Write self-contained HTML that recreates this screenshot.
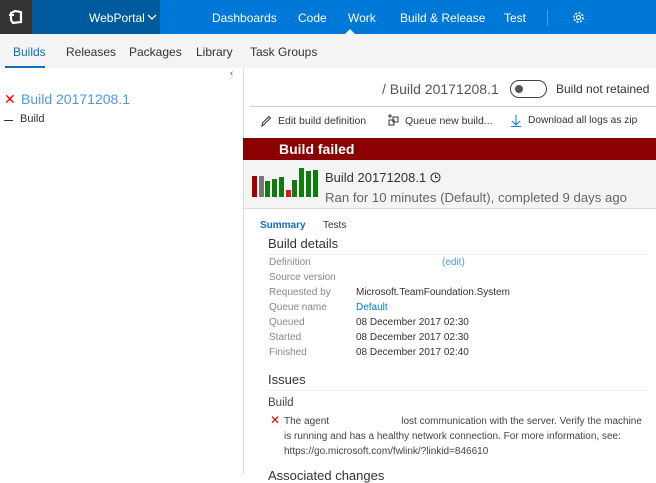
<!DOCTYPE html>
<html><head><style>
*{margin:0;padding:0;box-sizing:border-box}
body{width:656px;height:474px;overflow:hidden;font-family:"Liberation Sans",sans-serif;background:#fff;position:relative;color:#333}
.a{position:absolute;white-space:nowrap}
.nav{left:0;top:0;width:656px;height:34px;background:#0078d7}
.n{color:#fff;font-size:12px;top:11px}
.s{font-size:12px;top:45px;color:#333}
.lbl{font-size:10px;color:#888;left:269px}
.val{font-size:10px;color:#333;left:356px}
</style></head><body>
<div class="a nav"></div>
<div class="a" style="left:0;top:0;width:32px;height:34px;background:#333"></div>
<svg class="a" style="left:8px;top:9px" width="16" height="16" viewBox="0 0 16 16"><path d="M3 4 L7 2 L13 3 L13 13 L5 14 L3 11 Z" fill="none" stroke="#fff" stroke-width="2.2"/><path d="M1 6 L6 6" stroke="#fff" stroke-width="2"/></svg>
<div class="a" style="left:32px;top:0;width:128px;height:34px;background:#005a9e"></div>
<span class="a n" style="left:89px">WebPortal</span>
<svg class="a" style="left:147px;top:13px" width="10" height="8"><path d="M1 2 L5 6 L9 2" fill="none" stroke="#fff" stroke-width="1.3"/></svg>
<span class="a n" style="left:212px">Dashboards</span>
<span class="a n" style="left:298px">Code</span>
<span class="a n" style="left:348px">Work</span>
<span class="a n" style="left:400px">Build &amp; Release</span>
<span class="a n" style="left:504px">Test</span>
<div class="a" style="left:547px;top:10px;width:1px;height:16px;background:#4da0e4"></div>
<svg class="a" style="left:572px;top:11px" width="13" height="13" viewBox="0 0 13 13"><circle cx="6.5" cy="6.5" r="4.5" fill="none" stroke="#fff" stroke-width="1.6" stroke-dasharray="2 1.5"/><circle cx="6.5" cy="6.5" r="2" fill="none" stroke="#fff" stroke-width="1.2"/></svg>
<svg class="a" style="left:344px;top:29px" width="12" height="6"><path d="M0 6 L6 0 L12 6Z" fill="#f4f4f4"/></svg>
<div class="a" style="left:0;top:34px;width:656px;height:34px;background:#f4f4f4"></div>
<span class="a s" style="left:13px;color:#106ebe">Builds</span>
<div class="a" style="left:5px;top:66px;width:40px;height:2px;background:#106ebe"></div>
<span class="a s" style="left:66px">Releases</span>
<span class="a s" style="left:129px">Packages</span>
<span class="a s" style="left:196px">Library</span>
<span class="a s" style="left:250px">Task Groups</span>
<div class="a" style="left:243px;top:68px;width:1px;height:406px;background:#ddd"></div>
<span class="a" style="left:230px;top:68px;font-size:10px;color:#555">‹</span>
<span class="a" style="left:4px;top:91px;font-size:14px;color:#e00">✕</span>
<span class="a" style="left:21px;top:91px;font-size:14px;color:#4a9be0">Build 20171208.1</span>
<div class="a" style="left:4px;top:120px;width:9px;height:1px;background:#333"></div>
<span class="a" style="left:20px;top:113px;font-size:11px;color:#333">Build</span>
<span class="a" style="left:382px;top:81px;font-size:14px;color:#555">/ Build 20171208.1</span>
<div class="a" style="left:510px;top:80px;width:37px;height:18px;border:1.5px solid #444;border-radius:9px"></div>
<div class="a" style="left:515px;top:85px;width:8px;height:8px;border-radius:50%;background:#555"></div>
<span class="a" style="left:556px;top:82px;font-size:12px;color:#333">Build not retained</span>
<div class="a" style="left:250px;top:106px;width:406px;height:1px;background:#ccc"></div>
<svg class="a" style="left:260px;top:115px" width="12" height="12"><path d="M2 11 L2.5 8 L9 1.5 L10.5 3 L4 9.5 Z" fill="none" stroke="#333" stroke-width="1"/></svg>
<span class="a" style="left:278px;top:115px;font-size:10.5px">Edit build definition</span>
<svg class="a" style="left:387px;top:114px" width="13" height="13"><rect x="2" y="6" width="5" height="5" fill="none" stroke="#333"/><rect x="6" y="3" width="5" height="5" fill="none" stroke="#333"/><path d="M3 0 V4 M1 2 H5" stroke="#333"/></svg>
<span class="a" style="left:405px;top:115px;font-size:10.5px">Queue new build...</span>
<svg class="a" style="left:510px;top:114px" width="12" height="13"><path d="M6 1 V11 M2 7 L6 11 L10 7 M1 12.5 H11" fill="none" stroke="#0078d7" stroke-width="1"/></svg>
<span class="a" style="left:528px;top:115px;font-size:10.2px">Download all logs as zip</span>
<div class="a" style="left:243px;top:138px;width:413px;height:22px;background:#8b0000"></div>
<span class="a" style="left:279px;top:141px;font-size:14px;font-weight:bold;color:#fff">Build failed</span>
<div class="a" style="left:244px;top:160px;width:412px;height:49px;background:#f4f4f4;border-bottom:1px solid #ddd"></div>
<div class="a" style="left:252px;top:176px;width:5px;height:21px;background:#a00000"></div>
<div class="a" style="left:259px;top:176px;width:5px;height:21px;background:#777"></div>
<div class="a" style="left:265px;top:181px;width:5px;height:16px;background:#107c10"></div>
<div class="a" style="left:272px;top:179px;width:5px;height:18px;background:#107c10"></div>
<div class="a" style="left:279px;top:177px;width:5px;height:20px;background:#107c10"></div>
<div class="a" style="left:286px;top:190px;width:5px;height:7px;background:#e81123"></div>
<div class="a" style="left:292px;top:180px;width:5px;height:17px;background:#107c10"></div>
<div class="a" style="left:299px;top:168px;width:5px;height:29px;background:#107c10"></div>
<div class="a" style="left:306px;top:171px;width:5px;height:26px;background:#107c10"></div>
<div class="a" style="left:313px;top:170px;width:5px;height:27px;background:#107c10"></div>
<span class="a" style="left:325px;top:170px;font-size:13px;color:#333">Build 20171208.1</span>
<svg class="a" style="left:430px;top:172px" width="11" height="11"><circle cx="5.5" cy="5.5" r="4.5" fill="none" stroke="#333" stroke-width="1.1"/><path d="M5.5 2.5 V5.5 H8" fill="none" stroke="#333"/></svg>
<span class="a" style="left:325px;top:190px;font-size:13.2px;color:#666">Ran for 10 minutes (Default), completed 9 days ago</span>
<span class="a" style="left:260px;top:220px;font-size:10px;color:#106ebe;font-weight:bold">Summary</span>
<span class="a" style="left:323px;top:220px;font-size:10px;color:#333">Tests</span>
<span class="a" style="left:268px;top:236px;font-size:13px;color:#333">Build details</span>
<div class="a" style="left:268px;top:254px;width:380px;height:1px;background:#eee"></div>
<span class="a lbl" style="top:257px">Definition</span><span class="a" style="left:442px;top:257px;font-size:10px;color:#4a9be0">(edit)</span>
<span class="a lbl" style="top:272px">Source version</span>
<span class="a lbl" style="top:287px">Requested by</span><span class="a val" style="top:287px">Microsoft.TeamFoundation.System</span>
<span class="a lbl" style="top:302px">Queue name</span><span class="a val" style="top:302px;color:#0078d7">Default</span>
<span class="a lbl" style="top:317px">Queued</span><span class="a val" style="top:317px">08 December 2017 02:30</span>
<span class="a lbl" style="top:332px">Started</span><span class="a val" style="top:332px">08 December 2017 02:30</span>
<span class="a lbl" style="top:347px">Finished</span><span class="a val" style="top:347px">08 December 2017 02:40</span>
<span class="a" style="left:268px;top:372px;font-size:13px;color:#333">Issues</span>
<div class="a" style="left:268px;top:390px;width:380px;height:1px;background:#eee"></div>
<span class="a" style="left:268px;top:397px;font-size:11.5px;color:#444">Build</span>
<span class="a" style="left:270px;top:413px;font-size:12px;color:#e00">✕</span>
<div class="a" style="left:284px;top:414px;font-size:10px;color:#444;white-space:normal;width:358px;line-height:15px">The agent &nbsp;&nbsp;&nbsp;&nbsp;&nbsp;&nbsp;&nbsp;&nbsp;&nbsp;&nbsp;&nbsp;&nbsp;&nbsp;&nbsp;&nbsp;&nbsp;&nbsp;&nbsp;&nbsp;&nbsp;&nbsp;&nbsp;&nbsp;&nbsp;&nbsp;lost communication with the server. Verify the machine is running and has a healthy network connection. For more information, see: https://go.microsoft.com/fwlink/?linkid=846610</div>
<span class="a" style="left:268px;top:468px;font-size:13px;color:#333">Associated changes</span>
</body></html>
